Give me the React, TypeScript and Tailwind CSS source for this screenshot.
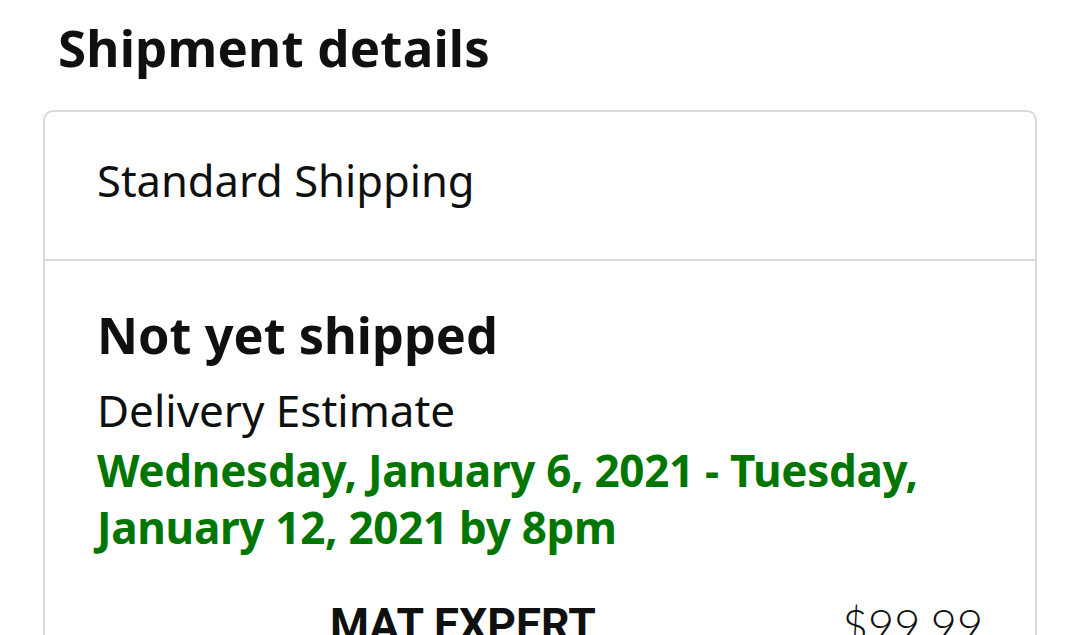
const ink = "text-[#0f1111]";

export default function App() {
    return (
        <div className="min-h-[635px] w-[1080px] overflow-hidden bg-white font-['Noto_Sans',sans-serif]">
            <div className="px-[43px] pt-[19px]">
                <h2
                    className={`pl-[15px] text-[51px] font-bold leading-[56px] tracking-[0.2px] ${ink}`}
                >
                    Shipment details
                </h2>

                <div className="mt-[35px] rounded-[10px] border-2 border-[#d9d9d9]">
                    <div className="border-b-2 border-[#d9d9d9] pb-[53px] pl-[52px] pt-[42px]">
                        <p className={`text-[43.5px] leading-[52px] ${ink}`}>
                            Standard Shipping
                        </p>
                    </div>

                    <div className="pl-[52px] pr-[52px] pt-[44px]">
                        <p
                            className={`text-[50.5px] font-bold leading-[60px] ${ink}`}
                        >
                            Not yet shipped
                        </p>
                        <p
                            className={`mt-[17px] text-[44px] leading-[56px] ${ink}`}
                        >
                            Delivery Estimate
                        </p>
                        <p className="mt-[4px] text-[44px] font-bold leading-[57px] tracking-[-0.3px] text-[#007600]">
                            Wednesday, January 6, 2021 - Tuesday,
                            <br />
                            January 12, 2021 by 8pm
                        </p>

                        {/* product row, image area left blank */}
                        <div className="mt-[43px] flex items-start">
                            <div className="h-[140px] w-[233px] shrink-0" />
                            <p
                                className={`font-['Roboto',sans-serif] text-[44.5px] font-bold leading-[52px] ${ink}`}
                            >
                                MAT EXPERT
                            </p>
                            <p
                                className={`ml-auto font-['Lato',sans-serif] text-[45px] font-light leading-[52px] ${ink}`}
                            >
                                $99.99
                            </p>
                        </div>
                    </div>
                </div>
            </div>
        </div>
    );
}
